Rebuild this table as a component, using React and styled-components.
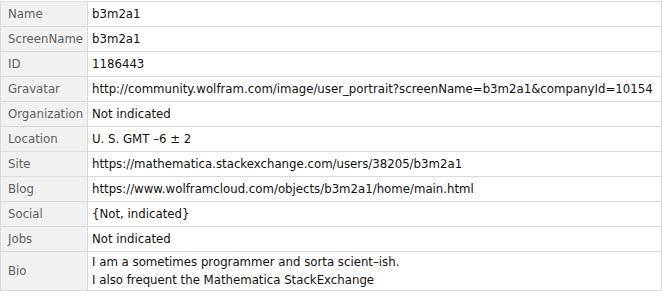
import styled, { createGlobalStyle } from 'styled-components'

const GlobalStyle = createGlobalStyle`
    body{
        margin: 0;
        background: #ffffff;
        font-family: "DejaVu Sans", Verdana, sans-serif;
    }
`;

const rows = [
    ['Name', ['b3m2a1']],
    ['ScreenName', ['b3m2a1']],
    ['ID', ['1186443']],
    ['Gravatar', ['http://community.wolfram.com/image/user_portrait?screenName=b3m2a1&companyId=10154']],
    ['Organization', ['Not indicated']],
    ['Location', ['U. S. GMT \u20136 \u00b1 2']],
    ['Site', ['https://mathematica.stackexchange.com/users/38205/b3m2a1']],
    ['Blog', ['https://www.wolframcloud.com/objects/b3m2a1/home/main.html']],
    ['Social', ['{Not, indicated}']],
    ['Jobs', ['Not indicated']],
    ['Bio', ['I am a sometimes programmer and sorta scient\u2013ish.', 'I also frequent the Mathematica StackExchange']],
];

export default function App(){
    return(
        <>
            <GlobalStyle/>
            <Wrap>
                <Table>
                    <tbody>
                        {rows.map(([label, lines]) => (
                            <Row key={label} tall={lines.length > 1}>
                                <Label>{label}</Label>
                                <Value>
                                    {lines.map(l => <Line key={l}>{l}</Line>)}
                                </Value>
                            </Row>
                        ))}
                    </tbody>
                </Table>
            </Wrap>
        </>
    )
}

const Wrap = styled.div`
    padding-top: 1px;
    width: 662px;
`;

const Table = styled.table`
    border-collapse: collapse;
    width: 662px;
    font-size: 11.75px;
    table-layout: fixed;
`;

const Row = styled.tr`
    height: ${props => props.tall ? '39px' : '25px'};
`;

const Label = styled.td`
    width: 79px;
    padding: 0 0 0 7px;
    background: #f1f1f1;
    color: #5f5f5f;
    border: 1px solid #dadada;
    vertical-align: middle;
    white-space: nowrap;
`;

const Value = styled.td`
    padding: 0 0 0 4px;
    color: #111111;
    border: 1px solid #dadada;
    vertical-align: middle;
    white-space: nowrap;
    overflow: hidden;
`;

const Line = styled.div`
    line-height: 18px;
`;
